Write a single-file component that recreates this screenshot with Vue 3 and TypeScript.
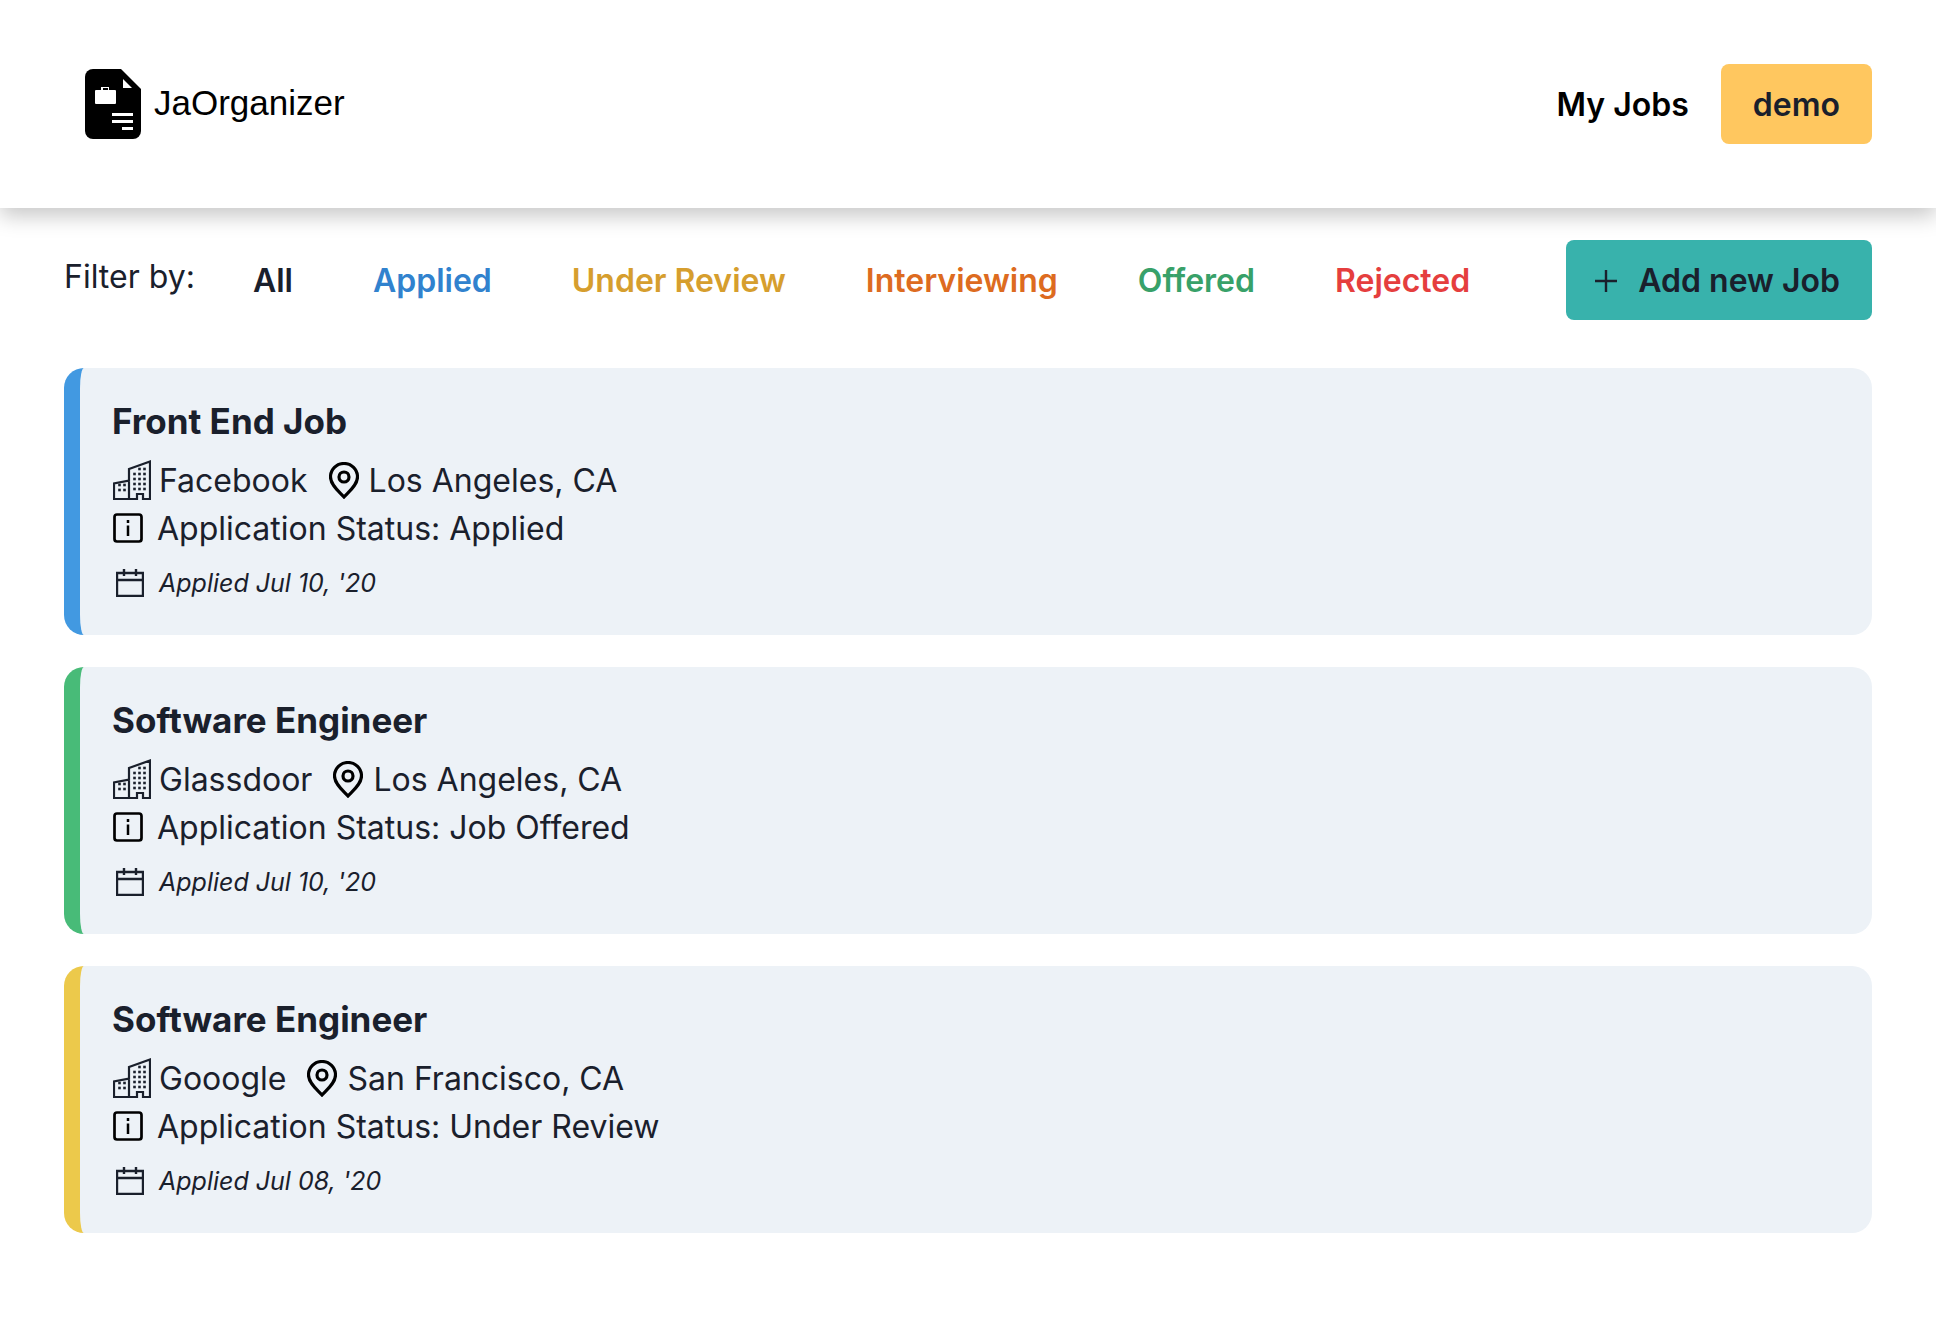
<script setup lang="ts">
import { computed, ref } from 'vue'

type Status = 'applied' | 'review' | 'interviewing' | 'offered' | 'rejected'

interface Job {
  title: string
  company: string
  location: string
  status: Status
  label: string
  date: string
}

const filters: { key: Status | 'all'; text: string }[] = [
  { key: 'all', text: 'All' },
  { key: 'applied', text: 'Applied' },
  { key: 'review', text: 'Under Review' },
  { key: 'interviewing', text: 'Interviewing' },
  { key: 'offered', text: 'Offered' },
  { key: 'rejected', text: 'Rejected' },
]

const jobs: Job[] = [
  { title: 'Front End Job', company: 'Facebook', location: 'Los Angeles, CA', status: 'applied', label: 'Applied', date: "Jul 10, '20" },
  { title: 'Software Engineer', company: 'Glassdoor', location: 'Los Angeles, CA', status: 'offered', label: 'Job Offered', date: "Jul 10, '20" },
  { title: 'Software Engineer', company: 'Gooogle', location: 'San Francisco, CA', status: 'review', label: 'Under Review', date: "Jul 08, '20" },
]

const current = ref<Status | 'all'>('all')
const shown = computed(() => jobs.filter((j) => current.value === 'all' || j.status === current.value))

// Window centres of the two buildings in the company icon
const windows: [number, number][] = [
  ...[14, 19, 24, 29].flatMap((y) => [21.5, 26.5, 31.5].map((x): [number, number] => [x, y])),
  [26.5, 9], [31.5, 9],
  [6.5, 25], [11.5, 25], [6.5, 30], [11.5, 30],
]
</script>

<template>
  <div class="page">
    <header class="header">
      <a class="brand" href="#">
        <svg class="logo" viewBox="0 0 56 70" aria-hidden="true">
          <path d="M8 0H36L56 20V62a8 8 0 0 1-8 8H8a8 8 0 0 1-8-8V8a8 8 0 0 1 8-8z" fill="#000" />
          <path d="M38 10v9h9z" fill="#fff" />
          <path d="M11 21h5v-3h8v3h6a1 1 0 0 1 1 1v12a1 1 0 0 1-1 1H11a1 1 0 0 1-1-1V22a1 1 0 0 1 1-1zM18 19v2h5v-2z" fill="#fff" fill-rule="evenodd" />
          <path d="M27 44h21v3H27zM27 51h21v3H27zM37 58h11v3H37z" fill="#fff" />
        </svg>
        <span>JaOrganizer</span>
      </a>
      <nav class="nav">
        <a class="link" href="#">My Jobs</a>
        <button class="btn user" type="button">demo</button>
      </nav>
    </header>

    <main class="main">
      <div class="toolbar">
        <p class="caption">Filter by:</p>
        <div class="filters">
          <button
            v-for="f in filters"
            :key="f.key"
            type="button"
            class="btn ghost"
            :class="f.key"
            @click="current = f.key"
          >{{ f.text }}</button>
        </div>
        <button class="btn add" type="button">
          <svg class="plus" viewBox="0 0 22 22" aria-hidden="true">
            <path d="M11 0v22M0 11h22" stroke="currentColor" stroke-width="2.400" />
          </svg>
          Add new Job
        </button>
      </div>

      <article v-for="(job, i) in shown" :key="i" class="card" :class="job.status">
        <h2 class="title">{{ job.title }}</h2>
        <div class="row">
          <svg class="building" viewBox="0 0 38 40" aria-hidden="true">
            <path d="M1 39V23.500l15-3V9L37 1.500V39h-7v-5H24v5zM16 20v19" fill="none" stroke="currentColor" stroke-width="2.200" />
            <rect v-for="([x, y], n) in windows" :key="n" :x="x - 1.300" :y="y - 1.300" width="2.600" height="2.600" fill="currentColor" />
          </svg>
          <span class="company">{{ job.company }}</span>
          <svg class="pin" viewBox="0 0 30 37" aria-hidden="true">
            <path d="M15 35C10 29.500 1.500 23 1.500 15a13.500 13.500 0 0 1 27 0C28.500 23 20 29.500 15 35z" fill="none" stroke="#000" stroke-width="3.200" />
            <circle cx="15" cy="15" r="5" fill="none" stroke="#000" stroke-width="3.200" />
          </svg>
          <span>{{ job.location }}</span>
        </div>
        <div class="row">
          <svg class="info" viewBox="0 0 30 30" aria-hidden="true">
            <rect x="1.500" y="1.500" width="27" height="27" rx="2.500" fill="none" stroke="#000" stroke-width="2.700" />
            <path d="M15 7v3M15 12.500V23" stroke="#000" stroke-width="2.500" />
          </svg>
          <span>Application Status: {{ job.label }}</span>
        </div>
        <div class="row small">
          <svg class="calendar" viewBox="0 0 28 28" aria-hidden="true">
            <path d="M1 4h26v23H1zM1 11h26M8 0v7M20 0v7" fill="none" stroke="currentColor" stroke-width="2.400" />
          </svg>
          <em>Applied {{ job.date }}</em>
        </div>
      </article>
    </main>
  </div>
</template>

<style>
body {
  margin: 0;
  background: #fff;
}
</style>

<style scoped>
.page {
  color: #1a202c;
  font-family: Inter, 'Liberation Sans', sans-serif;
  font-size: 32px;
  font-feature-settings: 'calt' 0, 'liga' 0;
  line-height: 48px;
}

.header {
  display: flex;
  align-items: center;
  justify-content: space-between;
  padding: 64px;
  box-shadow: 0 8px 20px rgba(0, 0, 0, 0.22);
}

.brand {
  display: flex;
  align-items: center;
  gap: 13px;
  margin-left: 21px;
  color: #000;
  font-family: 'Liberation Sans', Arial, sans-serif;
  font-size: 35px;
  text-decoration: none;
}

.brand span {
  padding-bottom: 2px;
}

.logo {
  width: 56px;
  height: 70px;
}

.nav {
  display: flex;
  align-items: center;
  gap: 32px;
}

.link {
  padding-top: 2px;
  color: #000;
  font-weight: 600;
  text-decoration: none;
}

.btn {
  height: 80px;
  padding: 2px 32px 0;
  border: 0;
  border-radius: 8px;
  background: transparent;
  color: inherit;
  font: inherit;
  font-feature-settings: inherit;
  font-weight: 600;
  white-space: nowrap;
  cursor: pointer;
}

.user {
  background: #ffc75f;
}

.main {
  padding: 32px 64px;
}

.toolbar {
  display: flex;
  margin-bottom: 48px;
}

.caption {
  margin: 0 26px 0 0;
  line-height: 74px;
}

.filters {
  display: flex;
  flex: 1;
  gap: 16px;
}

.ghost.applied { color: #3182ce; }
.ghost.review { color: #d69e2e; }
.ghost.interviewing { color: #dd6b20; }
.ghost.offered { color: #38a169; }
.ghost.rejected { color: #e53e3e; }

.add {
  display: flex;
  align-items: center;
  gap: 21px;
  padding-left: 29px;
  background: #38b2ac;
}

.plus {
  width: 22px;
  height: 22px;
}

.card {
  margin-bottom: 32px;
  padding: 32px;
  border-left: 16px solid;
  border-radius: 20px;
  background: #edf2f7;
}

.card.applied { border-color: #4299e1; }
.card.offered { border-color: #48bb78; }
.card.review { border-color: #ecc94b; }
.card.interviewing { border-color: #ed8936; }
.card.rejected { border-color: #f56565; }

.title {
  margin: 0 0 14px;
  font-size: 35px;
  font-weight: 700;
  line-height: 43px;
}

.row {
  display: flex;
  align-items: center;
}

.building {
  width: 38px;
  height: 40px;
  margin: 0 8px 2px 1px;
}

.company {
  margin-right: 21px;
}

.pin {
  width: 30px;
  height: 37px;
  margin: 0 10px 2px 0;
}

.info {
  width: 30px;
  height: 30px;
  margin: 0 14px 2px 1px;
}

.small {
  margin-top: 10px;
  font-size: 25px;
  line-height: 40px;
}

.calendar {
  width: 28px;
  height: 28px;
  margin: 0 15px 0 4px;
}
</style>
